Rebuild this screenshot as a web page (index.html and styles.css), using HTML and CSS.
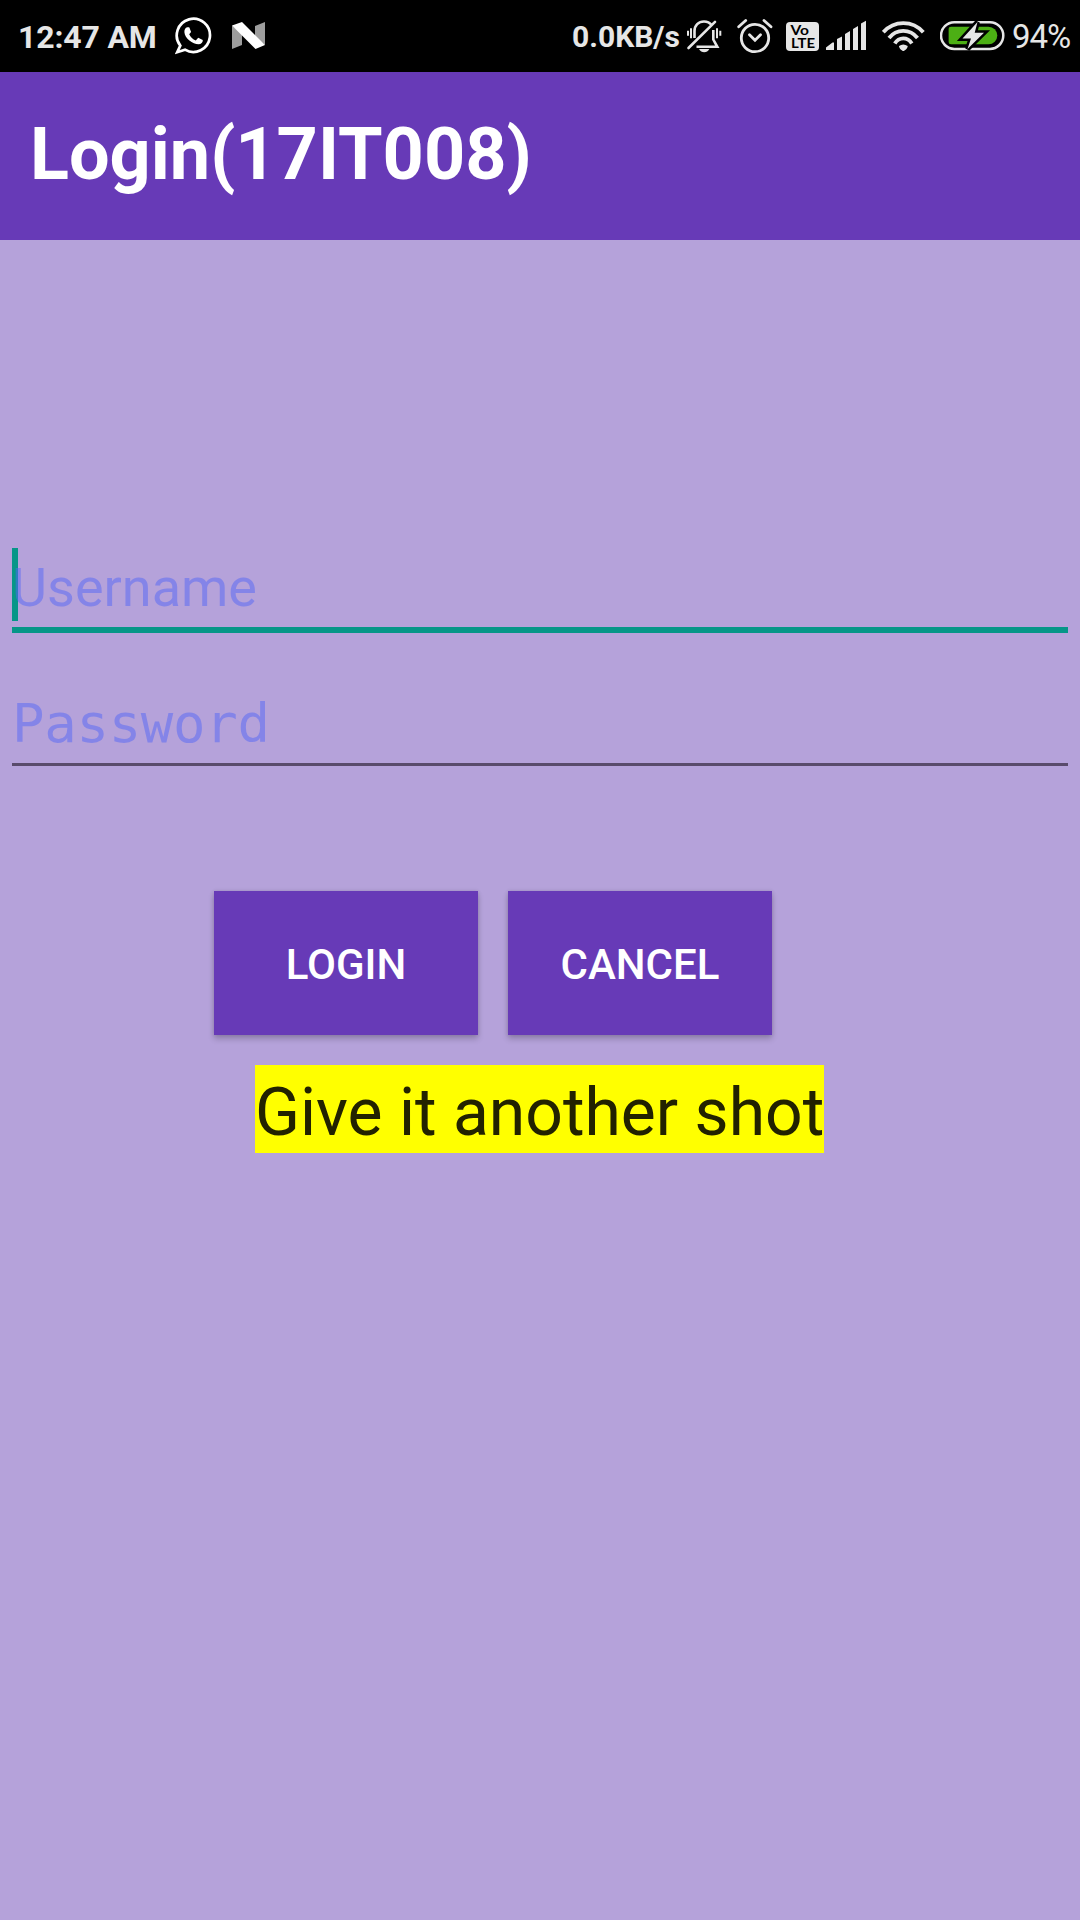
FILE: index.html
```html
<!DOCTYPE html>
<html lang="en">
<head>
<meta charset="utf-8">
<title>Login</title>
<link rel="stylesheet" href="styles.css">
</head>
<body>
<header class="status">
  <span class="clock">12:47 AM</span>
  <svg class="whatsapp" width="38" height="72" viewBox="175 0 38 72">
    <path d="M180.3 45.6A16.6 16.6 0 1 1 185 49.7L177.2 52.2Z" fill="none" stroke="#fff" stroke-width="2.7"/>
    <path d="M187.3 27.3c-2 .4-3.1 2.5-2.9 4.9.4 6 8.2 12 14.2 12 2.500 0 4.400-1.800 4.200-4.200l-4.600-2.300-2.400 2.700c-3-1.100-5.300-3.300-6.600-6.200l1.900-2.300-1.700-4.300c-.5-.4-1.300-.5-2.100-.3z" fill="#fff"/>
  </svg>
  <svg class="nougat" width="34" height="72" viewBox="232 0 34 72">
    <path d="M232 25.500V49L242 45V33ZM265 22V45L255 37V26Z" fill="#9d9d9d"/>
    <path d="M232 25.500L242 22 265 45 255.500 49Z" fill="#fff"/>
  </svg>
  <span class="spacer"></span>
  <span class="speed">0.0KB/s</span>
  <svg class="bell" width="36" height="72" viewBox="686 0 36 72">
    <g fill="none" stroke="#e6e6e6" stroke-width="2.600">
      <path d="M694.500 38V31C694.500 25.500 698.500 21.500 704 21.500C707.500 21.500 710 23 711.500 25M713.300 30V39.500L717.300 46.800H696.500"/>
      <path d="M688.500 48L715 21.800" stroke-linecap="round"/>
      <path d="M688 30.700V35.700M691 28.300V38.300M717 28.300V38.300M720.300 30.700V35.700" stroke-width="2"/>
    </g>
    <path d="M699 49H709.300Q707.500 52.300 704.200 52.300T699 49Z" fill="#e6e6e6"/>
  </svg>
  <svg class="alarm" width="36" height="72" viewBox="737 0 36 72">
    <g fill="none" stroke="#e6e6e6" stroke-width="2.800">
      <circle cx="755" cy="38" r="13.700"/>
      <path d="M749.500 34.700L755 40.200 760.500 34.700M738.700 26.800L745.700 20.500M764 20.500L771 26.800" stroke-linecap="round"/>
    </g>
  </svg>
  <svg class="volte" width="33" height="72" viewBox="786 0 33 72">
    <rect x="786" y="22" width="33" height="29" rx="4" fill="#e6e6e6"/>
    <text x="790.500" y="35" textLength="18.500" lengthAdjust="spacingAndGlyphs">Vo</text>
    <text x="791" y="47.800" textLength="24" lengthAdjust="spacingAndGlyphs">LTE</text>
  </svg>
  <svg class="signal" width="41" height="72" viewBox="826 0 41 72">
    <path d="M826 50V47.500L832.500 42.500H834V50ZM837 50V39L842 36.500V50ZM845 50V34L850 31V50ZM853 50V29L858 26V50ZM861 50V23.500L866 20.800V50Z" fill="#e6e6e6"/>
  </svg>
  <svg class="wifi" width="43" height="72" viewBox="882 0 43 72">
    <g fill="none" stroke="#e6e6e6" stroke-width="3.800">
      <path d="M883.300 32.200C894 20 912.700 20 923.300 32.200"/>
      <path d="M889 38C896.500 28.500 910 28.500 917.500 38"/>
      <path d="M894.800 43.500C899 36.700 907.500 36.700 911.800 43.500"/>
    </g>
    <path d="M899 46Q903.300 43 907.700 46C907.700 48.500 904.500 51 903.300 51S899 48.500 899 46Z" fill="#e6e6e6"/>
  </svg>
  <svg class="battery" width="65" height="72" viewBox="940 0 65 72">
    <rect x="941" y="22.200" width="62.300" height="26.700" rx="13.300" fill="none" stroke="#e6e6e6" stroke-width="2.500"/>
    <path d="M951 26.700H988.500A8.800 8.800 0 0 1 988.500 44.300H951Q948.600 44.300 948.600 42V29Q948.600 26.700 951 26.700Z" fill="#4caf14"/>
    <path d="M977.500 22L962.500 38.500H971L967.500 49L984 32.700H974.700Z" fill="#e6e6e6" stroke="#000" stroke-width="5" paint-order="stroke"/>
  </svg>
  <span class="percent">94%</span>
</header>
<div class="appbar"><h1 class="title">Login(17IT008)</h1></div>
<main class="content">
  <div class="field focused"><span class="caret"></span><span class="hint">Username</span></div>
  <div class="field password"><span class="hint">Password</span></div>
  <div class="actions">
    <button class="btn">LOGIN</button>
    <button class="btn">CANCEL</button>
  </div>
  <p class="message">Give it another shot</p>
</main>
</body>
</html>
```
FILE: styles.css
```css
* { box-sizing: border-box; }
body {
  margin: 0;
  width: 1080px;
  height: 1920px;
  background: #b5a2da;
  font-family: Roboto, "Liberation Sans", sans-serif;
  overflow: hidden;
}
.status {
  height: 72px;
  background: #000;
  display: flex;
  color: #e6e6e6;
  line-height: 74px;
  white-space: nowrap;
  overflow: hidden;
}
.status svg { flex: none; display: block; }
.clock { margin-left: 18px; width: 157px; font-size: 32px; font-weight: 700; letter-spacing: -.15px; }
.nougat { margin-left: 19px; }
.spacer { flex: 1; }
.speed { width: 114px; font-size: 30px; font-weight: 700; }
.alarm { margin-left: 15px; }
.volte { margin-left: 13px; }
.volte text { font: 700 13px Lato, sans-serif; fill: #000; }
.signal { margin-left: 7px; }
.wifi { margin-left: 15px; }
.battery { margin-left: 15px; }
.percent { margin-left: 7px; width: 68px; font-size: 33px; letter-spacing: -1px; }

.appbar {
  height: 168px;
  background: #673ab7;
  display: flex;
  align-items: center;
  padding: 0 0 2px 30px;
}
.title { margin: 0; color: #fff; font-size: 72px; line-height: 84px; font-weight: 700; }

.content { padding: 308px 12px 0; }
.field {
  position: relative;
  border-bottom: 3px solid #594b6b;
  color: rgba(81, 102, 246, .49);
  font-size: 54px;
  line-height: 64px;
}
.focused { height: 85px; border-bottom: 6px solid #069688; padding-top: 8px; }
.hint { position: relative; display: block; }
.caret {
  position: absolute;
  left: 0;
  top: 0;
  width: 6px;
  height: 73px;
  background: #069688;
}
.password {
  height: 133px;
  padding-top: 59px;
  font-family: "DejaVu Sans Mono", monospace;
  letter-spacing: -.3px;
}
.actions { display: flex; gap: 30px; margin: 125px 0 0 202px; }
.btn {
  width: 264px;
  height: 144px;
  border: 0;
  padding: 3px 0 0;
  background: #673ab7;
  color: #fff;
  font: 500 42px Roboto, sans-serif;
  box-shadow: 0 4px 6px rgba(0, 0, 0, .2), 0 0 4px rgba(0, 0, 0, .12);
}
.message {
  width: 569px;
  height: 88px;
  margin: 30px 0 0 243px;
  background: #ff0;
  color: #222200;
  font-size: 66px;
  line-height: 96px;
  white-space: nowrap;
}
```
